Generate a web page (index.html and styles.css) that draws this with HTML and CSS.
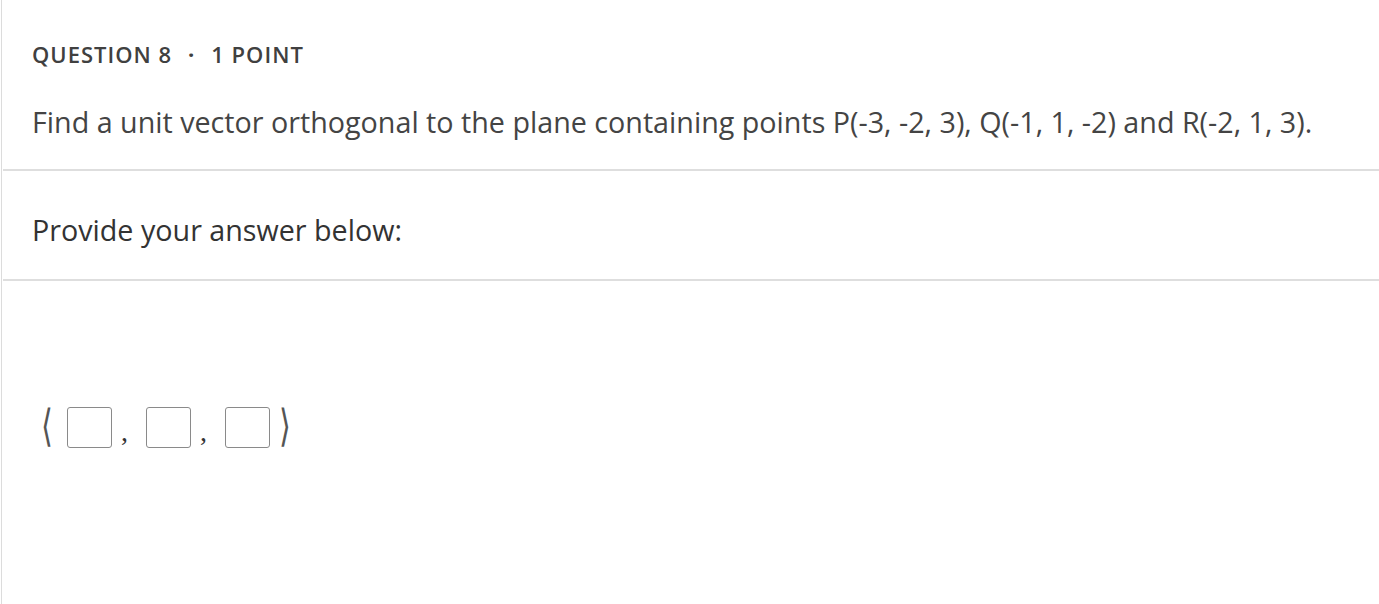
FILE: index.html
```html
<!DOCTYPE html>
<html>
<head>
<meta charset="utf-8">
<link rel="stylesheet" href="styles.css">
</head>
<body>
<div class="card">
  <section class="sec sec-q">
    <div class="meta"><span>QUESTION 8</span><span class="dot">·</span><span>1 POINT</span></div>
    <p class="qtext">Find a unit vector orthogonal to the plane containing points P(-3, -2, 3), Q(-1, 1, -2) and R(-2, 1, 3).</p>
  </section>
  <section class="sec sec-p">
    <p class="ptext">Provide your answer below:</p>
  </section>
  <section class="answer">
    <div class="vec">
      <span class="br br-l">⟨</span>
      <span class="box"></span><span class="comma">,</span>
      <span class="box"></span><span class="comma">,</span>
      <span class="box"></span>
      <span class="br br-r">⟩</span>
    </div>
  </section>
</div>
</body>
</html>
```
FILE: styles.css
```css
html, body { margin: 0; padding: 0; background: #fff; }
body { font-family: "Open Sans", "Liberation Sans", sans-serif; color: #333; }
.card {
  margin-left: 1px;
  border-left: 1px solid #dcdcdc;
  height: 604px;
  box-sizing: border-box;
}
.sec {
  margin-left: 1px;
  border-bottom: 2px solid #dedede;
  padding-left: 29px;
}
.sec-q { padding-top: 39px; height: 171px; box-sizing: border-box; }
.meta {
  font-size: 22px;
  font-weight: 600;
  letter-spacing: 1px;
  color: #404040;
  line-height: 30px;
  display: flex;
  gap: 16px;
}
.dot { font-weight: 700; }
.qtext {
  margin: 34px 0 0;
  font-size: 28.7px;
  line-height: 38px;
  color: #444;
}
.sec-p { height: 110px; box-sizing: border-box; padding-top: 40px; }
.ptext { margin: 0; font-size: 28.7px; line-height: 38px; color: #333; }
.answer { padding: 125px 0 0 39px; }
.vec { display: flex; align-items: center; height: 42px; }
.br {
  font-family: "DejaVu Sans", sans-serif;
  font-weight: 200;
  font-size: 30px;
  color: #555;
  line-height: 42px;
  display: inline-block;
  transform: scaleY(1.45);
}
.br-l { margin-right: 14px; }
.br-r { margin-left: 9px; }
.box {
  width: 43px; height: 39px;
  border: 1px solid #8a8a8a;
  border-radius: 3px;
}
.comma {
  font-family: "Liberation Serif", serif;
  font-size: 28px;
  line-height: 20px;
  align-self: flex-end;
  margin: 0 18px 6px 9px;
  color: #333;
}
```
